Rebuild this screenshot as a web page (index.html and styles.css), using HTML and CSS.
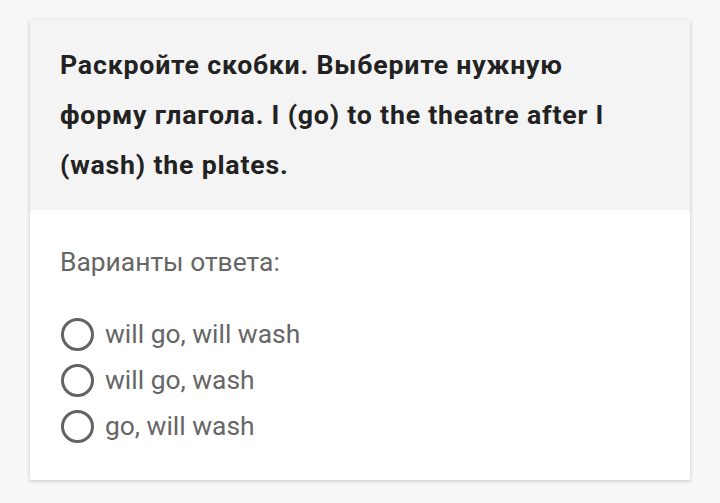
FILE: index.html
```html
<!DOCTYPE html>
<html lang="ru">
<head>
<meta charset="utf-8">
<link rel="stylesheet" href="styles.css">
</head>
<body>
<div class="card">
  <div class="card-head">Раскройте скобки. Выберите нужную форму глагола. I (go) to the theatre after I (wash) the plates.</div>
  <div class="card-body">
    <div class="label">Варианты ответа:</div>
    <ul class="options">
      <li class="option"><span class="radio"></span><span>will go, will wash</span></li>
      <li class="option"><span class="radio"></span><span>will go, wash</span></li>
      <li class="option"><span class="radio"></span><span>go, will wash</span></li>
    </ul>
  </div>
</div>
</body>
</html>
```
FILE: styles.css
```css
html, body {
  margin: 0;
  padding: 0;
  background: #f8f8f8;
  font-family: Roboto, "Noto Sans", sans-serif;
}
body {
  padding: 20px 30px 23px 30px;
}
.card {
  width: 660px;
  background: #fff;
  box-shadow: 0 1px 4px rgba(0,0,0,0.22);
  border-radius: 2px;
}
.card-head {
  background: #f4f4f4;
  padding: 20px 60px 20px 30px;
  font-size: 26.7px;
  font-weight: 700;
  line-height: 50px;
  letter-spacing: 0.8px;
  color: #222;
}
.card-body {
  padding: 28px 30px 31px 30px;
}
.label {
  font-size: 26.4px;
  line-height: 48px;
  color: #666;
}
.options {
  list-style: none;
  margin: 25px 0 0 0;
  padding: 0;
}
.option {
  display: flex;
  align-items: center;
  height: 46px;
  font-size: 26.4px;
  color: #666;
}
.radio {
  width: 27px;
  height: 27px;
  border: 3.5px solid #636363;
  border-radius: 50%;
  margin-left: 1px;
  margin-right: 11px;
  flex: none;
}
```
